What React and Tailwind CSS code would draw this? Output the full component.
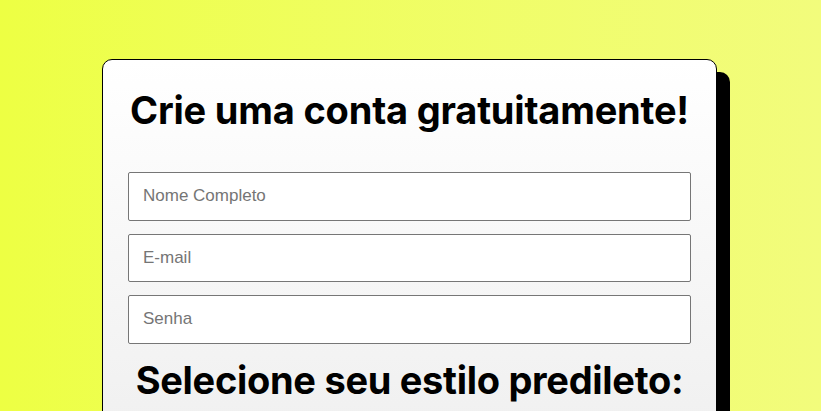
import React from 'react';

function Field({ placeholder, type = 'text' }) {
  return (
    <input
      type={type}
      placeholder={placeholder}
      className="w-full h-[48.5px] border border-[#767676] rounded-[2px] bg-white px-[14px] text-[17px] text-black placeholder:text-[#757575] outline-none"
      style={{ fontFamily: '"Liberation Sans", Arial, sans-serif' }}
    />
  );
}

export default function App() {
  return (
    <div className="min-h-[411px] h-[411px] overflow-hidden bg-gradient-to-r from-[#edff43] to-[#f2fc7c]">
      <div className="mt-[59px] ml-[102px] w-[615px] h-[420px] border border-black rounded-[10px] bg-gradient-to-b from-white to-[#eeeeee] shadow-[13px_13px_0_#000] px-[25px] flex flex-col">
        <h1
          className="mt-[27px] text-center text-[38px] leading-[46px] font-bold tracking-[-0.2px] text-black"
          style={{ fontFamily: 'Inter, "Liberation Sans", sans-serif' }}
        >
          Crie uma conta gratuitamente!
        </h1>
        <form className="mt-[39px] flex flex-col gap-[13px]">
          <Field placeholder="Nome Completo" />
          <Field placeholder="E-mail" type="email" />
          <Field placeholder="Senha" type="password" />
        </form>
        <h2
          className="mt-[13px] text-center text-[38px] leading-[46px] font-bold tracking-[-0.3px] text-black"
          style={{ fontFamily: 'Inter, "Liberation Sans", sans-serif' }}
        >
          Selecione seu estilo predileto:
        </h2>
      </div>
    </div>
  );
}
